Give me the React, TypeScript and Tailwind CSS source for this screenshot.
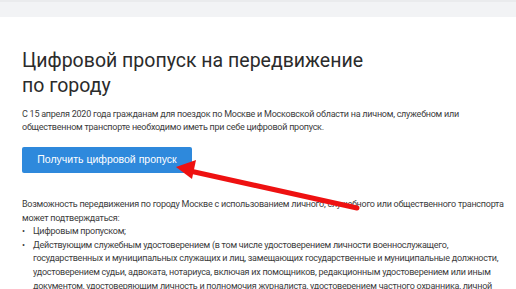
export default function App() {
    return (
        <div className="relative w-[516px] h-[289px] overflow-hidden bg-white" style={{ fontFamily: 'Roboto, "Noto Sans", sans-serif' }}>
            {/* top strip */}
            <div className="h-[17px] bg-[#f2f3f5] border-t-2 border-[#eaebed]" />

            <div className="px-[22px] pt-[31px] whitespace-nowrap">
                <h1 className="text-[19.5px] leading-[25px] font-normal text-[#2b2b2b]">
                    Цифровой пропуск на передвижение
                    <br />
                    по городу
                </h1>

                <p className="mt-[10px] text-[9px] leading-[13px] tracking-[-0.25px] text-[#3c3c3c]">
                    С 15 апреля 2020 года гражданам для поездок по Москве и Московской области на личном, служебном или
                    <br />
                    общественном транспорте необходимо иметь при себе цифровой пропуск.
                </p>

                <button
                    className="mt-[13px] flex h-[26px] w-[170px] items-center justify-center rounded-[2px] bg-[#2e89dc] text-[10.5px] text-white"
                    style={{ fontFamily: '"Liberation Sans", Arial, sans-serif' }}
                >
                    Получить цифровой пропуск
                </button>

                <div className="mt-[25px] text-[9px] leading-[13.6px] tracking-[-0.25px] text-[#3c3c3c]">
                    <p>
                        Возможность передвижения по городу Москве с использованием личного, служебного или общественного транспорта
                        <br />
                        может подтверждаться:
                    </p>
                    <ul>
                        <li className="flex gap-[6px]">
                            <span className="shrink-0 w-[5px]">•</span>
                            <span>Цифровым пропуском;</span>
                        </li>
                        <li className="flex gap-[6px]">
                            <span className="shrink-0 w-[5px]">•</span>
                            <span>
                                Действующим служебным удостоверением (в том числе удостоверением личности военнослужащего,
                                <br />
                                государственных и муниципальных служащих и лиц, замещающих государственные и муниципальные должности,
                                <br />
                                удостоверением судьи, адвоката, нотариуса, включая их помощников, редакционным удостоверением или иным
                                <br />
                                документом, удостоверяющим личность и полномочия журналиста, удостоверением частного охранника, личной
                            </span>
                        </li>
                    </ul>
                </div>
            </div>

            {/* red arrow drawn over the page */}
            <svg className="pointer-events-none absolute left-0 top-0" width="516" height="289" viewBox="0 0 516 289">
                <line x1="190" y1="171" x2="357" y2="208" stroke="#ee1111" strokeWidth="5" strokeLinecap="round" />
                <polygon points="176,167 196,160 192,179" fill="#ee1111" />
            </svg>
        </div>
    )
}
